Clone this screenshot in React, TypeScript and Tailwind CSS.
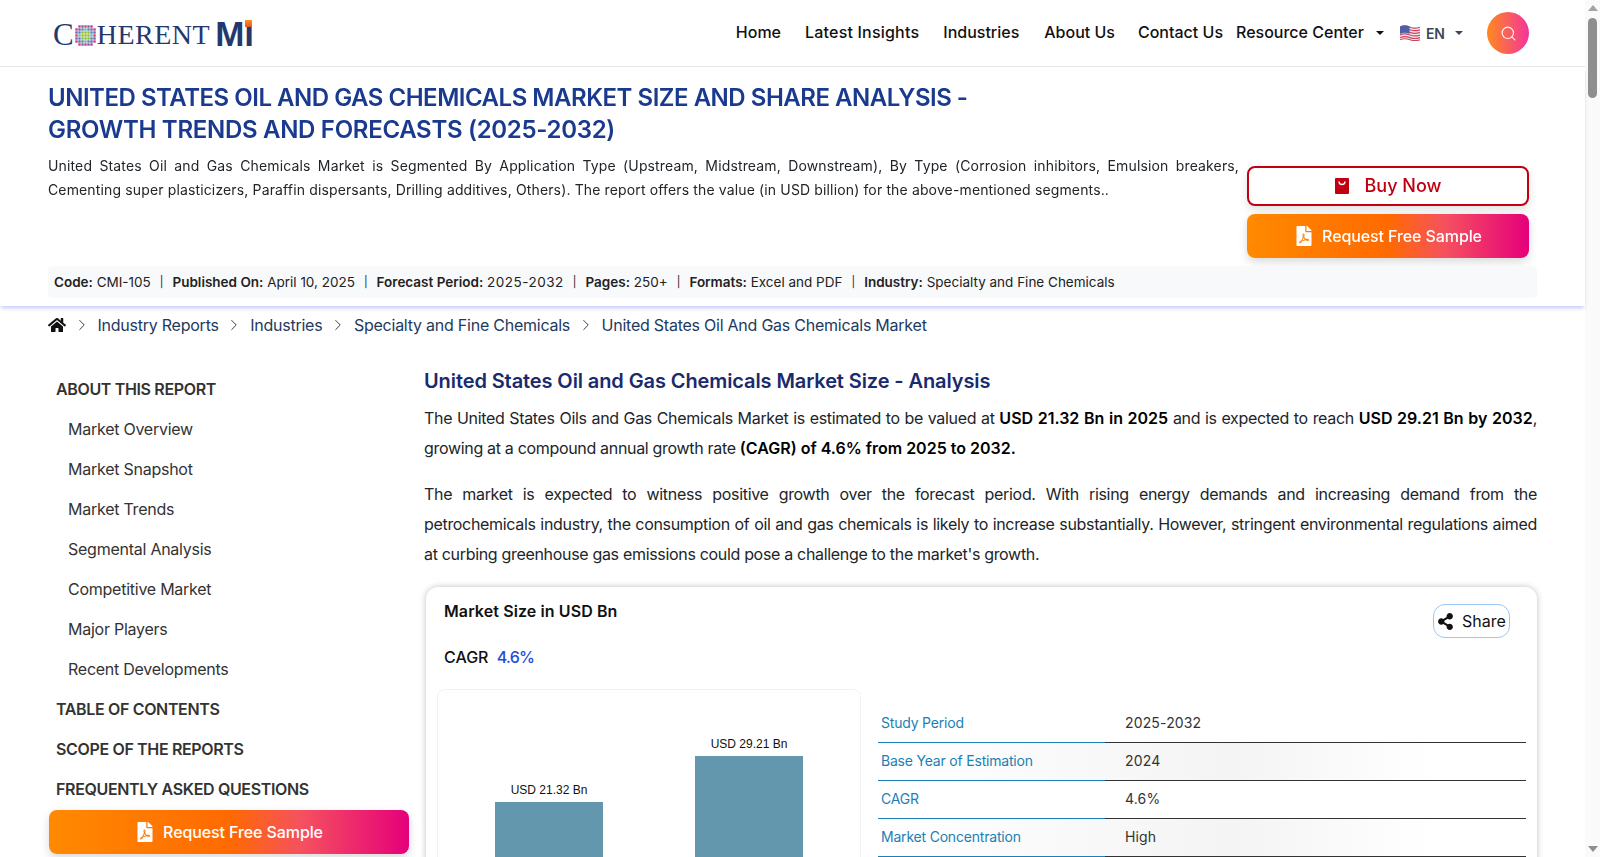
import { ChevronRight, Search } from 'lucide-react'
import { FaHome, FaFilePdf, FaShareAlt } from 'react-icons/fa'

const tocItems = ['Market Overview', 'Market Snapshot', 'Market Trends', 'Segmental Analysis', 'Competitive Market', 'Major Players', 'Recent Developments']
const tocBottom = ['TABLE OF CONTENTS', 'SCOPE OF THE REPORTS', 'FREQUENTLY ASKED QUESTIONS']
const crumbs = ['Industry Reports', 'Industries', 'Specialty and Fine Chemicals', 'United States Oil And Gas Chemicals Market']
const rows = [
  ['Study Period', '2025-2032'],
  ['Base Year of Estimation', '2024'],
  ['CAGR', '4.6%'],
  ['Market Concentration', 'High'],
]
const meta = [
  ['Code:', 'CMI-105'],
  ['Published On:', 'April 10, 2025'],
  ['Forecast Period:', '2025-2032'],
  ['Pages:', '250+'],
  ['Formats:', 'Excel and PDF'],
  ['Industry:', 'Specialty and Fine Chemicals'],
]

function LogoMark() {
  const cell = (r: number, c: number) => {
    const d = Math.hypot(r - 3, c - 3)
    if (d > 3.7) return null
    if (d < 1.6) return '#8dbb2e'
    if (d < 2.6) return (r + c) % 2 ? '#5b7fb5' : '#6fb3a5'
    return (r + c) % 2 ? '#d6338c' : '#5a6fa8'
  }
  return (
    <svg width="21" height="21" viewBox="0 0 21 21" className="mx-[1px] mb-[1px]">
      {[0, 1, 2, 3, 4, 5, 6].map(r => [0, 1, 2, 3, 4, 5, 6].map(c => {
        const fill = cell(r, c)
        return fill ? <rect key={`${r}-${c}`} x={c * 3 + 0.3} y={r * 3 + 0.3} width="2.4" height="2.4" fill={fill} /> : null
      }))}
    </svg>
  )
}

function Logo() {
  return (
    <div className="flex items-end h-[28px] text-[#24386e] leading-none" style={{ fontFamily: '"Liberation Serif", serif' }}>
      <span className="text-[31px] leading-[25px]">C</span>
      <LogoMark />
      <span className="text-[28px] leading-[24px] tracking-[0.5px]">HERENT</span>
      <span className="text-[35px] leading-[26px] font-black ml-[5px]" style={{ fontFamily: '"Liberation Sans", sans-serif' }}>M</span>
      <span className="relative text-[35px] leading-[26px] font-black" style={{ fontFamily: '"Liberation Sans", sans-serif' }}>ı
        <span className="absolute left-[1px] top-[-1px] w-[7px] h-[7px] bg-gradient-to-b from-[#f7941d] to-[#e8502a]"></span>
      </span>
    </div>
  )
}

function Caret({ className }: { className: string }) {
  return <span className={`w-0 h-0 border-x-[4px] border-x-transparent border-t-[4px] ${className}`}></span>
}

function Flag() {
  return (
    <svg width="20" height="16" viewBox="0 0 20 16">
      <path d="M0 1.5c3-1.5 6-1.5 10 0s7 1 10 0v13c-3 1-6 1.500-10 0s-7-1.500-10 0z" fill="#eceaf0" />
      {[0, 2.6, 5.200, 7.800, 10.400, 12.600].map(y => (
        <path key={y} d={`M0 ${y + 2.200}c3-1.500 6-1.500 10 0s7 1 10 0`} fill="none" stroke="#d0455e" strokeWidth="1.200" />
      ))}
      <path d="M0 1.500c3-1.500 6-1.500 9.500-.2v7.500c-3.500-1.300-6.500-1.300-9.500 .2z" fill="#4f5fa3" />
    </svg>
  )
}

function Scrollbar() {
  return (
    <div className="fixed top-0 right-0 w-[15px] h-[857px] bg-[#fafafa] flex flex-col items-center justify-between py-[5px]">
      <span className="w-0 h-0 border-x-[5px] border-x-transparent border-b-[6px] border-b-[#a3a3a3]"></span>
      <span className="absolute top-[18px] left-[3px] w-[9px] h-[80px] rounded-full bg-[#8f8f8f]"></span>
      <span className="w-0 h-0 border-x-[5px] border-x-transparent border-t-[6px] border-t-[#8f8f8f]"></span>
    </div>
  )
}

function SampleButton({ className }: { className: string }) {
  return (
    <button className={`flex items-center justify-center gap-[8px] h-[44px] pb-[1px] rounded-lg text-white text-[16px] font-medium tracking-[-0.1px] bg-[linear-gradient(90deg,#ff8a00_0%,#ff6a00_50%,#f5515f_70%,#e5007a_100%)] shadow-[0_4px_10px_rgba(0,0,0,0.15)] ${className}`}>
      <FaFilePdf className="text-[20px]" />
      Request Free Sample
    </button>
  )
}

export default function App() {
  return (
    <div className="w-[1585px] min-h-[8700px] bg-white text-[#212529]" style={{ fontFamily: 'Inter, "Liberation Sans", sans-serif' }}>
      <Scrollbar />
      <header className="h-[67px] flex items-center justify-between pl-[53px] pr-[56px] border-b border-[#e6e6e6] bg-white">
        <Logo />
        <nav className="flex items-center text-[16px] font-medium text-[#111]">
          <a className="mr-[24px] pb-[2px]">Home</a>
          <a className="mr-[24px] pb-[2px] tracking-[0.2px]">Latest Insights</a>
          <a className="mr-[25px] pb-[2px]">Industries</a>
          <a className="mr-[23px] pb-[2px]">About Us</a>
          <a className="mr-[13px] pb-[2px]">Contact Us</a>
          <a className="mr-[12px] pb-[2px]">Resource Center</a>
          <Caret className="border-t-[#111] mr-[16px]" />
          <Flag />
          <span className="ml-[6px] text-[14px] font-semibold text-[#3c4858]">EN</span>
          <Caret className="border-t-[#3c4858] ml-[10px] mr-[24px]" />
          <span className="w-[42px] h-[42px] rounded-full flex items-center justify-center text-white bg-[linear-gradient(90deg,#ff8a1e,#f5339c)]">
            <Search size={17} strokeWidth={1.5} />
          </span>
        </nav>
      </header>

      <section className="h-[239px] pl-[48px] pr-[48px] pt-[15px] shadow-[0_3px_4px_-1px_rgba(80,100,255,0.35)] bg-white relative">
        <h1 className="text-[24px] leading-[32px] font-semibold text-[#1a3a8f]">
          <span className="block tracking-[-0.48px]">UNITED STATES OIL AND GAS CHEMICALS MARKET SIZE AND SHARE ANALYSIS -</span>
          <span className="block tracking-[-0.3px]">GROWTH TRENDS AND FORECASTS (2025-2032)</span>
        </h1>
        <div className="flex justify-between mt-[2px]">
          <p className="w-[1191px] text-[14px] leading-[24px] tracking-[0.14px] text-justify text-[#212529] mt-[6px]">
            United States Oil and Gas Chemicals Market is Segmented By Application Type (Upstream, Midstream, Downstream), By Type (Corrosion inhibitors, Emulsion breakers, Cementing super plasticizers, Paraffin dispersants, Drilling additives, Others). The report offers the value (in USD billion) for the above-mentioned segments..
          </p>
          <div className="w-[282px] mr-[8px] mt-[18px] flex flex-col gap-[8px]">
            <button className="flex items-center justify-center gap-[16px] h-[40px] pb-[1px] rounded-lg border-2 border-[#c00010] bg-white text-[#c00010] text-[18px] font-medium shadow-[0_4px_10px_rgba(0,0,0,0.12)]">
              <svg width="14" height="16" viewBox="0 0 14 16">
                <rect width="14" height="16" rx="1" fill="#c00010" />
                <path d="M4 3.500c0 4 6 4 6 0" fill="none" stroke="#fff" strokeWidth="1.400" />
              </svg>
              Buy Now
            </button>
            <SampleButton className="" />
          </div>
        </div>
        <div className="absolute left-[48px] right-[48px] top-[199px] h-[32px] flex items-center pl-[6px] bg-[#f8f9fb] rounded text-[13.5px] text-[#222]">
          {meta.map(([k, v], i) => (
            <span key={k} className="whitespace-pre">
              {i > 0 && <span className="mx-[9px] text-[11px] align-[1px]">|</span>}
              <b className="font-semibold">{k}</b> <span className={v === '2025-2032' ? 'tracking-[0.5px]' : ''}>{v}</span>
            </span>
          ))}
        </div>
      </section>

      <div className="flex items-center h-[38px] pl-[48px] text-[16px] tracking-[-0.24px] text-[#1e3a5f]">
        <FaHome className="text-[18px] text-[#111]" />
        {crumbs.map(c => (
          <span key={c} className="flex items-center">
            <ChevronRight size={18} strokeWidth={1.25} className="mx-[6.75px] text-[#333]" />
            <span>{c}</span>
          </span>
        ))}
      </div>

      <div className="flex pl-[48px] pr-[48px] mt-[25px]">
        <aside className="w-[376px] shrink-0 pr-[15px] tracking-[-0.25px]">
          <div className="pl-[8px] h-[40px] leading-[40px] text-[16px] font-semibold tracking-[-0.35px] text-[#333]">ABOUT THIS REPORT</div>
          {tocItems.map(t => (
            <div key={t} className="pl-[20px] h-[40px] leading-[40px] text-[16px] text-[#333]">{t}</div>
          ))}
          {tocBottom.map(t => (
            <div key={t} className="pl-[8px] h-[40px] leading-[40px] text-[16px] font-semibold tracking-[-0.35px] text-[#333]">{t}</div>
          ))}
          <SampleButton className="w-[360px] ml-[1px] mt-[1px]" />
        </aside>

        <main className="flex-1 min-w-0">
          <h2 className="text-[20px] leading-[28px] font-semibold tracking-[-0.1px] text-[#1a2a6c] -mt-[2px]">United States Oil and Gas Chemicals Market Size - Analysis</h2>
          <p className="mt-[8px] text-[16px] leading-[30px] tracking-[-0.32px] text-justify text-[#212529]">
            The United States Oils and Gas Chemicals Market is estimated to be valued at <b className="font-semibold tracking-normal text-black">USD 21.32 Bn in 2025</b> and is expected to reach <b className="font-semibold tracking-normal text-black">USD 29.21 Bn by 2032</b>, growing at a compound annual growth rate <b className="font-semibold tracking-normal text-black">(CAGR) of 4.6% from 2025 to 2032.</b>
          </p>
          <p className="mt-[16px] text-[16px] leading-[30px] tracking-[-0.32px] text-[#212529]">
            <span className="block [text-align-last:justify]">The market is expected to witness positive growth over the forecast period. With rising energy demands and increasing demand from the</span>
            <span className="block [text-align-last:justify]">petrochemicals industry, the consumption of oil and gas chemicals is likely to increase substantially. However, stringent environmental regulations aimed</span>
            <span className="block">at curbing greenhouse gas emissions could pose a challenge to the market's growth.</span>
          </p>

          <div className="mt-[18px] ml-[2px] rounded-xl bg-white shadow-[0_0_6px_rgba(0,0,0,0.25)] h-[560px] px-[11px] pt-[14px]">
            <div className="flex justify-between pl-[7px] pr-[16px]">
              <div>
                <div className="text-[16px] leading-[20px] font-semibold tracking-[0.1px] text-[#111]">Market Size in USD Bn</div>
                <div className="mt-[26px] text-[16px] leading-[20px] font-medium text-[#111]">
                  CAGR <span className="ml-[4px] tracking-[-0.7px] text-[#1d4ed8]">4.6%</span>
                </div>
              </div>
              <button className="flex items-center gap-[8px] h-[34px] w-[77px] justify-center mt-[3px] rounded-xl border border-[#9cc7f5] bg-white text-[16px] text-[#111]">
                <FaShareAlt className="text-[17px]" />
                Share
              </button>
            </div>
            <div className="flex mt-[22px] gap-[17px]">
              <div className="w-[424px] h-[400px] rounded-lg border border-[#f2f2f2] shrink-0 flex items-start justify-center gap-[92px]" style={{ fontFamily: '"Liberation Sans", sans-serif' }}>
                <div className="w-[108px] flex flex-col items-center mt-[90px]">
                  <span className="text-[12px] leading-[20px] text-[#111] whitespace-nowrap">USD 21.32 Bn</span>
                  <div className="w-[108px] h-[200px] bg-[#6397ae] mt-[2px]"></div>
                </div>
                <div className="w-[108px] flex flex-col items-center mt-[44px]">
                  <span className="text-[12px] leading-[20px] text-[#111] whitespace-nowrap">USD 29.21 Bn</span>
                  <div className="w-[108px] h-[246px] bg-[#6397ae] mt-[2px]"></div>
                </div>
              </div>
              <div className="flex-1 pt-[16px]">
                {rows.map(([k, v], i) => (
                  <div key={k} className={`flex h-[38px] items-center text-[14px] ${i % 2 ? 'bg-[linear-gradient(90deg,#fff_0%,#f4f4f4_55%,#fff_85%)]' : ''}`}>
                    <div className="w-[227px] h-full flex items-center pl-[3px] pb-[2px] tracking-[-0.2px] text-[#1c7fb5] border-b-[1.5px] border-[#1c7fb5]">{k}</div>
                    <div className="flex-1 h-full flex items-center pl-[20px] pb-[2px] tracking-[0.15px] text-[#333] border-b-[1.5px] border-[#333]">{v}</div>
                  </div>
                ))}
              </div>
            </div>
          </div>
        </main>
      </div>
    </div>
  )
}
